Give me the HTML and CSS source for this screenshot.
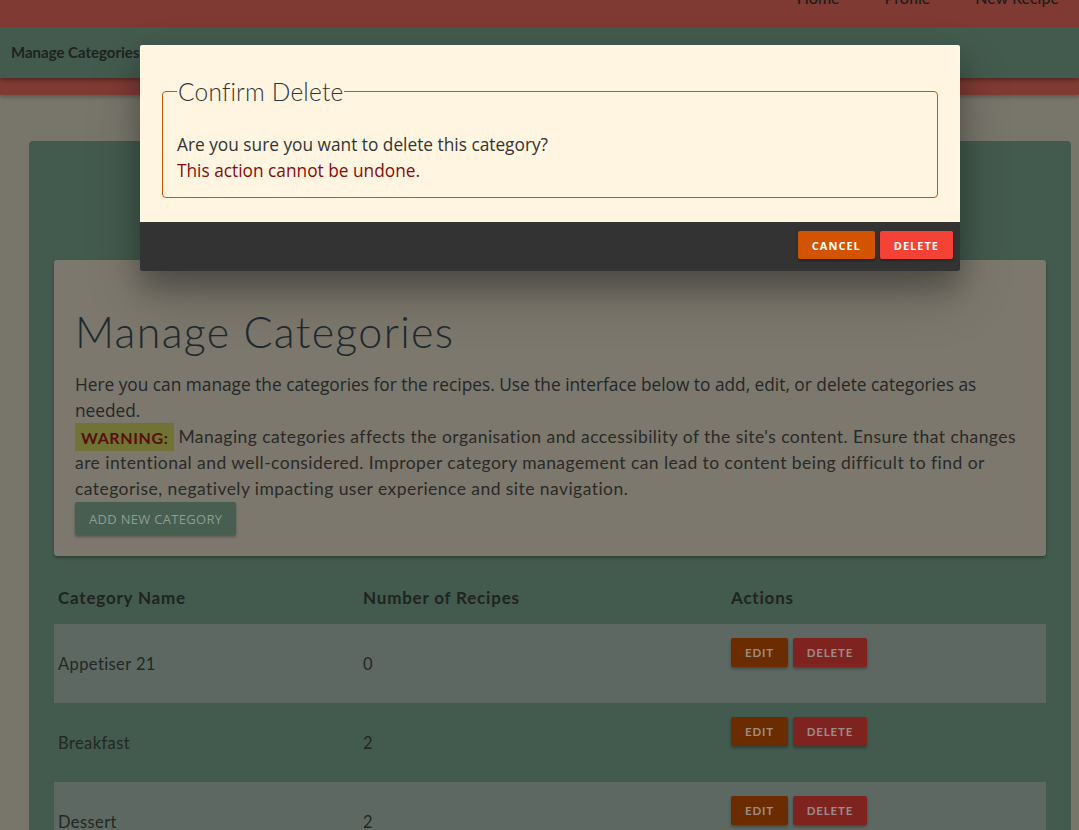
FILE: index.html
```html
<!DOCTYPE html>
<html lang="en">
<head>
<meta charset="utf-8">
<title>Manage Categories</title>
<link rel="stylesheet" href="styles.css">
</head>
<body>
<header class="topnav">
  <ul class="topnav-links">
    <li>Home</li>
    <li>Profile</li>
    <li>New Recipe</li>
  </ul>
</header>
<div class="subnav">Manage Categories</div>
<div class="strip"></div>
<main class="page">
  <section class="panel">
    <div class="card">
      <h1 class="title">Manage Categories</h1>
      <p class="intro">Here you can manage the categories for the recipes. Use the interface below to add, edit, or delete categories as needed.<br><span class="badge">WARNING:</span><span class="warn">Managing categories affects the organisation and accessibility of the site's content. Ensure that changes are intentional and well-considered. Improper category management can lead to content being difficult to find or categorise, negatively impacting user experience and site navigation.</span></p>
      <button class="add-btn">Add new category</button>
    </div>
    <table class="cats">
      <thead>
        <tr><th class="c1">Category Name</th><th class="c2">Number of Recipes</th><th class="c3">Actions</th></tr>
      </thead>
      <tbody>
        <tr class="odd"><td>Appetiser 21</td><td>0</td><td class="actions"><span class="btn edit">Edit</span> <span class="btn del">Delete</span></td></tr>
        <tr><td>Breakfast</td><td>2</td><td class="actions"><span class="btn edit">Edit</span> <span class="btn del">Delete</span></td></tr>
        <tr class="odd"><td>Dessert</td><td>2</td><td class="actions"><span class="btn edit">Edit</span> <span class="btn del">Delete</span></td></tr>
      </tbody>
    </table>
  </section>
</main>
<div class="modal">
  <div class="modal-content">
    <fieldset class="box">
      <legend class="legend">Confirm Delete</legend>
      <p class="msg">Are you sure you want to delete this category?<br><span class="danger">This action cannot be undone.</span></p>
    </fieldset>
  </div>
  <div class="modal-footer">
    <button class="mbtn cancel">Cancel</button>
    <button class="mbtn confirm">Delete</button>
  </div>
</div>
</body>
</html>
```
FILE: styles.css
```css
html, body {
  margin: 0;
  padding: 0;
  height: 830px;
  overflow: hidden;
  background: #78766b;
  font-family: "Open Sans", "Liberation Sans", sans-serif;
}

.topnav {
  height: 59px;
  margin-top: -32px;
  background: #7f3a33;
  display: flex;
  justify-content: flex-end;
}
.topnav-links {
  list-style: none;
  margin: 0;
  padding: 0 20px 0 0;
  display: flex;
  gap: 45px;
  line-height: 59px;
  font-family: Lato, sans-serif;
  font-weight: 500;
  font-size: 16px;
  color: #1c1c1c;
}

.subnav {
  height: 51px;
  background: #435a4e;
  padding-left: 11px;
  line-height: 51px;
  font-family: Lato, sans-serif;
  font-weight: 700;
  font-size: 15px;
  color: #1e2320;
  position: relative;
  z-index: 2;
  box-shadow: 0 2px 4px rgba(0,0,0,0.35);
}
.strip {
  height: 17px;
  background: #7f3a33;
  position: relative;
  z-index: 1;
  box-shadow: 0 2px 4px rgba(0,0,0,0.25);
}

.page {
  padding: 46px 8px 0 29px;
}
.panel {
  background: #435a4e;
  border-radius: 4px;
  padding: 119px 25px 0 25px;
  height: 700px;
}
.card {
  background: #7c786d;
  border-radius: 3px;
  box-shadow: 0 2px 3px rgba(0,0,0,0.3);
  padding: 22px 22px 20px 21px;
  height: 254px;
}
.title {
  margin: 26px 0 16px;
  font-family: Lato, sans-serif;
  font-weight: 300;
  font-size: 43px;
  line-height: 48px;
  color: #1f2a30;
  letter-spacing: 1.3px;
}
.intro {
  margin: 0;
  font-size: 17.3px;
  line-height: 26px;
  color: #23272a;
}
.badge {
  background: #6f7334;
  color: #5a0e0c;
  font-family: Lato, sans-serif;
  font-weight: 700;
  font-size: 16px;
  padding: 4.5px 6px;
  margin-right: 4px;
  letter-spacing: 0.6px;
}
.warn {
  font-family: Lato, sans-serif;
  font-size: 17.5px;
  letter-spacing: 0.45px;
  color: #2a2a28;
}
.add-btn {
  display: block;
  margin-top: 0;
  background: #485e51;
  color: #8c9d93;
  border: none;
  border-radius: 2px;
  height: 33px;
  padding: 0 14px;
  font-family: "Open Sans", sans-serif;
  font-size: 13px;
  text-transform: uppercase;
  letter-spacing: 0.3px;
  box-shadow: 0 2px 3px rgba(0,0,0,0.3);
}

.cats {
  width: 100%;
  border-collapse: collapse;
  margin-top: 14px;
  font-family: Lato, sans-serif;
  color: #1f2421;
}
.cats th {
  text-align: left;
  font-weight: 700;
  font-size: 17px;
  letter-spacing: 0.8px;
  padding: 15px 4px;
  height: 24px;
}
.c1 { width: 297px; }
.c2 { width: 360px; }
.cats td {
  height: 79px;
  padding: 0 4px;
  font-size: 16.5px;
  letter-spacing: 0.4px;
  color: #222824;
  box-sizing: border-box;
}
.cats tr.odd td { background: #5d6862; }
.cats td.actions {
  vertical-align: top;
  padding-top: 14px;
  padding-left: 4px;
}
.btn {
  display: inline-block;
  height: 29px;
  line-height: 29px;
  padding: 0 14px;
  border-radius: 2px;
  font-family: Lato, sans-serif;
  font-weight: 700;
  font-size: 11.5px;
  letter-spacing: 0.85px;
  text-transform: uppercase;
  color: #9c8b86;
  box-shadow: 0 2px 3px rgba(0,0,0,0.3);
}
.btn.edit { background: #6b2c00; }
.btn.del { background: #7f2320; }

.modal {
  position: fixed;
  z-index: 10;
  top: 45px;
  left: 140px;
  width: 820px;
  border-radius: 2px;
  overflow: hidden;
  box-shadow: 0 16px 28px rgba(0,0,0,0.25), 0 25px 55px rgba(0,0,0,0.2);
}
.modal-content {
  background: #fff5e1;
  padding: 32px 22px 24px 22px;
}
.box {
  margin: 0;
  border: 1px solid #d35400;
  border-radius: 4px;
  padding: 26px 14px 13px 14px;
}
.legend {
  padding: 0 1px;
  font-family: Lato, sans-serif;
  font-weight: 300;
  font-size: 24.5px;
  letter-spacing: 0.2px;
  color: #353535;
}
.msg {
  margin: 0;
  font-size: 17.3px;
  line-height: 26px;
  color: #343434;
}
.danger { color: #8b0b0b; }
.modal-footer {
  background: #333333;
  height: 49px;
  display: flex;
  justify-content: flex-end;
  align-items: flex-start;
  gap: 5px;
  padding: 9px 7px 0 0;
  box-sizing: border-box;
}
.mbtn {
  height: 28px;
  border: none;
  border-radius: 2px;
  color: #fff;
  font-family: "Open Sans", sans-serif;
  font-weight: 700;
  font-size: 11px;
  letter-spacing: 1px;
  text-transform: uppercase;
  padding: 0 14px;
  box-shadow: 0 2px 3px rgba(0,0,0,0.3);
}
.cancel { background: #d35400; }
.confirm { background: #f44336; }
```
